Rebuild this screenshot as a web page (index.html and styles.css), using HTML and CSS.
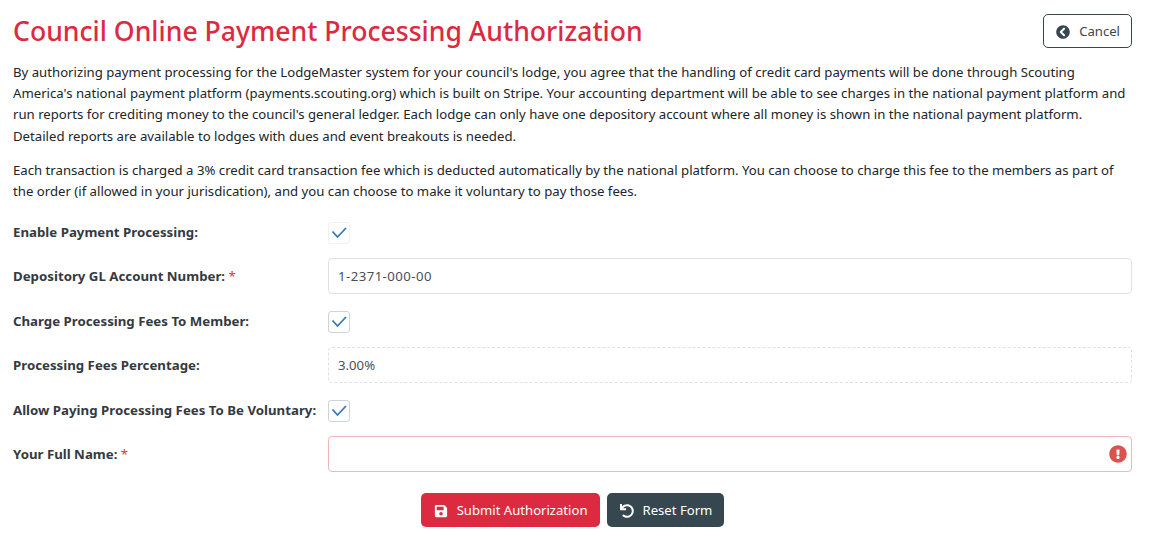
FILE: index.html
```html
<!DOCTYPE html>
<html lang="en">
<head>
<meta charset="utf-8">
<title>Council Online Payment Processing Authorization</title>
<link rel="stylesheet" href="styles.css">
</head>
<body>
<main class="page">
  <header class="head">
    <h1>Council Online Payment Processing Authorization</h1>
    <a class="btn btn-outline" href="#">
      <svg class="ico" viewBox="0 0 512 512"><path d="M256 504C119 504 8 393 8 256S119 8 256 8s248 111 248 248-111 248-248 248zM142.100 273l135.500 135.500c9.400 9.400 24.600 9.400 33.900 0l17-17c9.400-9.400 9.400-24.600 0-33.900L226.900 256l101.600-101.600c9.400-9.400 9.400-24.600 0-33.900l-17-17c-9.400-9.400-24.600-9.400-33.900 0L142.100 239c-9.400 9.400-9.400 24.600 0 34z"/></svg>
      <span>Cancel</span>
    </a>
  </header>
  <p>By authorizing payment processing for the LodgeMaster system for your council's lodge, you agree that the handling of credit card payments will be done through Scouting America's national payment platform (payments.scouting.org) which is built on Stripe. Your accounting department will be able to see charges in the national payment platform and run reports for crediting money to the council's general ledger. Each lodge can only have one depository account where all money is shown in the national payment platform. Detailed reports are available to lodges with dues and event breakouts is needed.</p>
  <p class="last">Each transaction is charged a 3% credit card transaction fee which is deducted automatically by the national platform. You can choose to charge this fee to the members as part of the order (if allowed in your jurisdication), and you can choose to make it voluntary to pay those fees.</p>
  <form class="form">
    <div class="row row-check">
      <label>Enable Payment Processing:</label>
      <span class="check check-soft"><svg viewBox="0 0 16 16"><path d="M1.500 6.500l5 5.500 8.500-9"/></svg></span>
    </div>
    <div class="row">
      <label>Depository GL Account Number: <i>*</i></label>
      <div class="input input-account">1-2371-000-00</div>
    </div>
    <div class="row row-check">
      <label>Charge Processing Fees To Member:</label>
      <span class="check"><svg viewBox="0 0 16 16"><path d="M1.500 6.500l5 5.500 8.500-9"/></svg></span>
    </div>
    <div class="row">
      <label>Processing Fees Percentage:</label>
      <div class="input input-readonly">3.00%</div>
    </div>
    <div class="row row-check">
      <label>Allow Paying Processing Fees To Be Voluntary:</label>
      <span class="check"><svg viewBox="0 0 16 16"><path d="M1.500 6.500l5 5.500 8.500-9"/></svg></span>
    </div>
    <div class="row">
      <label>Your Full Name: <i>*</i></label>
      <div class="input input-error">
        <svg class="err" viewBox="0 0 512 512"><path d="M504 256c0 137-111 248-248 248S8 393 8 256 119 8 256 8s248 111 248 248zm-248 50c-25.400 0-46 20.600-46 46s20.600 46 46 46 46-20.600 46-46-20.600-46-46-46zm-43.700-165.300l7.400 136c.3 6.400 5.600 11.300 12 11.300h48.500c6.400 0 11.600-5 12-11.300l7.400-136c.4-6.900-5.100-12.700-12-12.700h-63.400c-6.900 0-12.400 5.800-12 12.700z"/></svg>
      </div>
    </div>
    <div class="actions">
      <button type="button" class="btn btn-red">
        <svg class="ico" viewBox="0 0 448 512"><path d="M433.900 129.900l-83.900-83.900A48 48 0 0 0 316.100 32H48C21.500 32 0 53.500 0 80v352c0 26.500 21.500 48 48 48h352c26.500 0 48-21.500 48-48V163.900a48 48 0 0 0-14.100-34zM224 416c-35.300 0-64-28.700-64-64 0-35.300 28.700-64 64-64s64 28.700 64 64c0 35.300-28.700 64-64 64zm96-304.500V212c0 6.600-5.400 12-12 12H76c-6.600 0-12-5.400-12-12V108c0-6.600 5.400-12 12-12h228.500c3.200 0 6.200 1.300 8.500 3.500l3.500 3.500c2.200 2.200 3.500 5.300 3.500 8.500z"/></svg>
        <span>Submit Authorization</span>
      </button>
      <button type="reset" class="btn btn-dark">
        <svg class="ico" viewBox="0 0 512 512"><path d="M212.300 224.300H12c-6.600 0-12-5.400-12-12V12C0 5.400 5.400 0 12 0h48c6.600 0 12 5.400 12 12v78.100C117.800 39.300 184.300 7.500 258.200 8c136.900 .9 246.400 111.600 246 248.500C503.700 393.200 392.800 504 256 504c-64.100 0-122.500-24.300-166.500-64.200-5.100-4.600-5.300-12.600-.5-17.400l34-34c4.500-4.500 11.700-4.700 16.400-.5C170.800 415.300 211.600 432 256 432c97.300 0 176-78.700 176-176 0-97.300-78.700-176-176-176-58.500 0-110.300 28.500-142.300 72.300h98.300c6.600 0 12 5.400 12 12v48c0 6.600-5.400 12-12 12z"/></svg>
        <span>Reset Form</span>
      </button>
    </div>
  </form>
</main>
</body>
</html>
```

FILE: styles.css
```css
* { box-sizing: border-box; }
html, body { margin: 0; padding: 0; background: #fff; }
body {
  width: 1150px;
  height: 536px;
  overflow: hidden;
  font-family: "Noto Sans", "Open Sans", sans-serif;
  font-size: 13.18px;
  line-height: 21.33px;
  color: #343a40;
}
.page { padding: 14px 18px 0 13px; }
.head { display: flex; justify-content: space-between; align-items: flex-start; height: 47.8px; }
h1 {
  margin: 0;
  font-size: 26.6px;
  line-height: 34px;
  font-weight: 500;
  color: #dc2a40;
}
p { margin: 0 0 12.7px; max-width: 1118px; color: #212529; }
p.last { margin-bottom: 11.400px; }
.btn {
  display: inline-flex;
  align-items: center;
  gap: 9px;
  height: 34px;
  padding: 1px 11px 0 12px;
  border-radius: 5px;
  font: inherit;
  font-size: 13.12px;
  text-decoration: none;
  border: 1px solid transparent;
}
.ico { width: 14px; height: 14px; fill: currentColor; flex: none; }
.btn-outline { color: #37474f; border-color: #37474f; background: #fff; }
.btn-red { background: #dc2a40; color: #fff; padding-top: 2px; }
.btn-dark { background: #37474f; color: #fff; padding-top: 2px; }
.row { display: flex; align-items: center; height: 36px; margin-bottom: 8.500px; }
.row-check { padding-top: 2px; }
.row label { width: 315px; font-size: 13.25px; font-weight: 700; color: #343a40; flex: none; white-space: nowrap; }
.row label i { font-style: normal; font-weight: 400; color: #dc3545; }
.input {
  flex: 1;
  height: 36px;
  padding: 0 9px;
  border: 1px solid #dee2e6;
  border-radius: 4px;
  display: flex;
  align-items: center;
  color: #495057;
}
.input-account { letter-spacing: .45px; }
.input-readonly { border-style: dashed; }
.input-error { border-color: #f0b6b6; justify-content: flex-end; padding-right: 4px; }
.err { width: 18px; height: 18px; fill: #d9534f; }
.check {
  width: 22px; height: 22px;
  border: 1px solid #ced4da;
  border-radius: 3px;
  background: #fff;
  display: flex; align-items: center; justify-content: center;
}
.check-soft { border-color: #f1f1f1; }
.check svg { width: 16px; height: 16px; fill: none; stroke: #337ab7; stroke-width: 1.800; }
.actions { display: flex; justify-content: center; gap: 7px; margin-top: 20.300px; }
```
